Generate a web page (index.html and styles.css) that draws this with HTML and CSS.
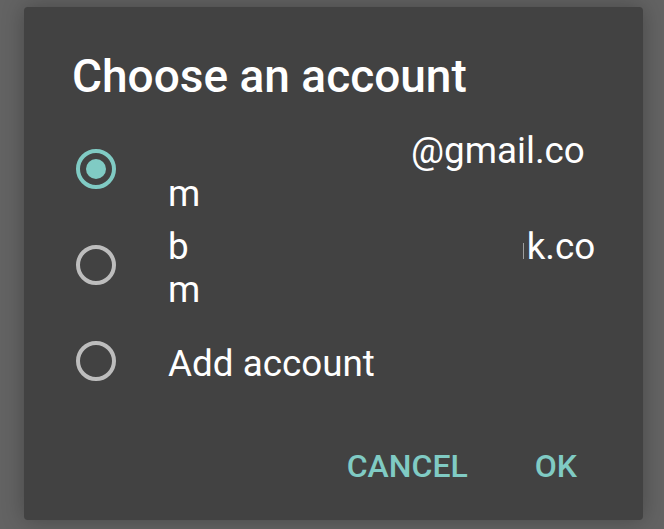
FILE: index.html
```html
<!DOCTYPE html>
<html lang="en">
<head>
<meta charset="utf-8">
<title>Choose an account</title>
<link rel="stylesheet" href="styles.css">
</head>
<body>
<div class="dialog">
  <h1 class="title">Choose an account</h1>
  <ul class="list">
    <li class="item">
      <span class="radio radio-checked"><span class="dot"></span></span>
      <div class="label">
        <div class="line"><span class="gap gap-1"></span>@gmail.co</div>
        <div class="line">m</div>
      </div>
    </li>
    <li class="item">
      <span class="radio"></span>
      <div class="label">
        <div class="line">b<span class="gap gap-2"></span><span class="sliver"></span>k.co</div>
        <div class="line">m</div>
      </div>
    </li>
    <li class="item">
      <span class="radio"></span>
      <div class="label">
        <div class="line">Add account</div>
      </div>
    </li>
  </ul>
  <div class="actions">
    <button class="btn btn-cancel">CANCEL</button>
    <button class="btn btn-ok">OK</button>
  </div>
</div>
</body>
</html>
```

FILE: styles.css
```css
html, body {
  margin: 0;
  padding: 0;
}

body {
  background: #636363;
  width: 664px;
  height: 529px;
  overflow: hidden;
  padding: 7px 0 0 24px;
  box-sizing: border-box;
  font-family: Roboto, "Noto Sans", sans-serif;
}

.dialog {
  width: 619px;
  height: 513px;
  box-sizing: border-box;
  background: #424242;
  border-radius: 4px;
  box-shadow: 0 0 22px rgba(0, 0, 0, 0.28);
  padding-top: 42px;
  display: flex;
  flex-direction: column;
}

.title {
  margin: 0;
  padding-left: 48px;
  font-size: 46px;
  line-height: 54px;
  font-weight: 500;
  color: #ffffff;
}

.list {
  list-style: none;
  margin: 18px 0 0 0;
  padding: 0;
}

.item {
  height: 96px;
  display: flex;
  align-items: center;
  padding-left: 52px;
}

.radio {
  width: 40px;
  height: 40px;
  box-sizing: border-box;
  border-radius: 50%;
  border: 4.5px solid #bdbdbd;
  flex: none;
  display: flex;
  align-items: center;
  justify-content: center;
}

.radio-checked {
  border-color: #80cbc4;
}

.dot {
  width: 20px;
  height: 20px;
  border-radius: 50%;
  background: #80cbc4;
}

.label {
  margin-left: 52px;
  margin-top: 5px;
  color: #ffffff;
  font-size: 36.8px;
  line-height: 43px;
}

.line {
  white-space: nowrap;
}

.gap {
  display: inline-block;
}

.gap-1 {
  width: 243px;
}

.gap-2 {
  width: 334px;
}

.sliver {
  display: inline-block;
  width: 1px;
  height: 16px;
  background: #9e9e9e;
  margin-right: 3px;
}

.actions {
  display: flex;
  justify-content: flex-end;
  margin-top: 37px;
  padding-right: 48px;
  gap: 31px;
}

.btn {
  background: none;
  border: none;
  margin: 0;
  padding: 0 18px;
  font-family: Roboto, "Noto Sans", sans-serif;
  font-size: 32px;
  line-height: 40px;
  font-weight: 500;
  color: #80cbc4;
}
```
